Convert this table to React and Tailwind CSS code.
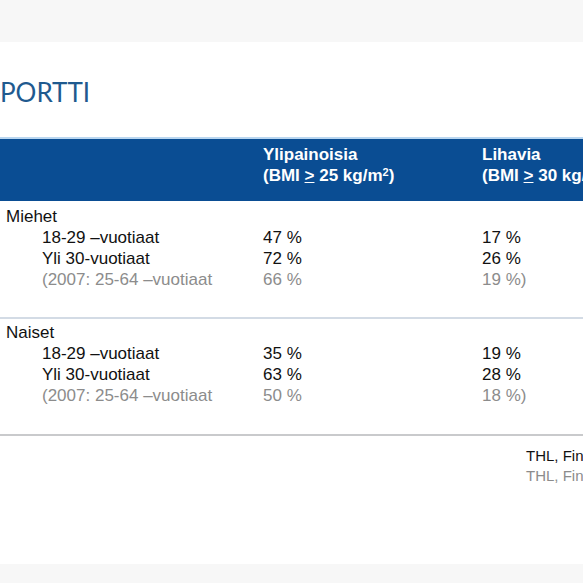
import React from 'react'

const groups = [
  {
    title: 'Miehet',
    rows: [
      { label: '18-29 –vuotiaat', a: '47 %', b: '17 %' },
      { label: 'Yli 30-vuotiaat', a: '72 %', b: '26 %' },
      { label: '(2007: 25-64 –vuotiaat', a: '66 %', b: '19 %)', muted: true },
    ],
    h: 'h-[118px]',
    border: 'border-[#d3dbe5]',
    pt: 'pt-[5px]',
  },
  {
    title: 'Naiset',
    rows: [
      { label: '18-29 –vuotiaat', a: '35 %', b: '19 %' },
      { label: 'Yli 30-vuotiaat', a: '63 %', b: '28 %' },
      { label: '(2007: 25-64 –vuotiaat', a: '50 %', b: '18 %)', muted: true },
    ],
    h: 'h-[117px]',
    border: 'border-[#c9cacc]',
    pt: 'pt-[3px]',
  },
]

function Group({ g }) {
  return (
    <div className={`${g.h} ${g.pt} border-b-2 ${g.border}`}>
      <div className="pl-[6px] leading-[21px] text-[#111]">{g.title}</div>
      {g.rows.map((r, i) => (
        <div
          key={i}
          className={`grid grid-cols-[263px_219px_1fr] leading-[21px] ${r.muted ? 'text-[#8c8c8c]' : 'text-[#111]'}`}
        >
          <div className="pl-[42px] whitespace-nowrap">{r.label}</div>
          <div>{r.a}</div>
          <div>{r.b}</div>
        </div>
      ))}
    </div>
  )
}

export default function App() {
  return (
    <div className="w-[583px] h-[583px] overflow-hidden bg-[#f7f7f7] flex flex-col">
      <div className="h-[42px] shrink-0" />
      <div className="h-[522px] shrink-0 bg-white w-[760px]">
        <div
          className="mt-[36px] pl-0 text-[26px] leading-[28px] text-[#1f5a8f]"
          style={{ fontFamily: 'Lato, "Open Sans", sans-serif' }}
        >
          PORTTI
        </div>

        <div style={{ fontFamily: '"Liberation Sans", Arial, sans-serif' }} className="text-[17px]">
          <div className="mt-[31px] h-[64px] border-t-2 border-[#b9d6f0] bg-[#0a4d93] pt-[5px]">
            <div className="grid grid-cols-[263px_219px_1fr] text-white font-bold text-[17px] leading-[21px] whitespace-nowrap">
              <div />
              <div>
                <div>Ylipainoisia</div>
                <div>
                  (BMI <span className="underline">&gt;</span> 25 kg/m<sup className="text-[11px]">2</sup>)
                </div>
              </div>
              <div>
                <div>Lihavia</div>
                <div>
                  (BMI <span className="underline">&gt;</span> 30 kg/m<sup className="text-[11px]">2</sup>)
                </div>
              </div>
            </div>
          </div>

          {groups.map((g, i) => (
            <Group key={i} g={g} />
          ))}

          <div className="pl-[526px] pt-[10px] text-[15px] leading-[20px] whitespace-nowrap">
            <div className="text-[#111]">THL, FinTerveys 2017</div>
            <div className="text-[#8c8c8c]">THL, Finravinto 2007</div>
          </div>
        </div>
      </div>
      <div className="flex-1" />
    </div>
  )
}
